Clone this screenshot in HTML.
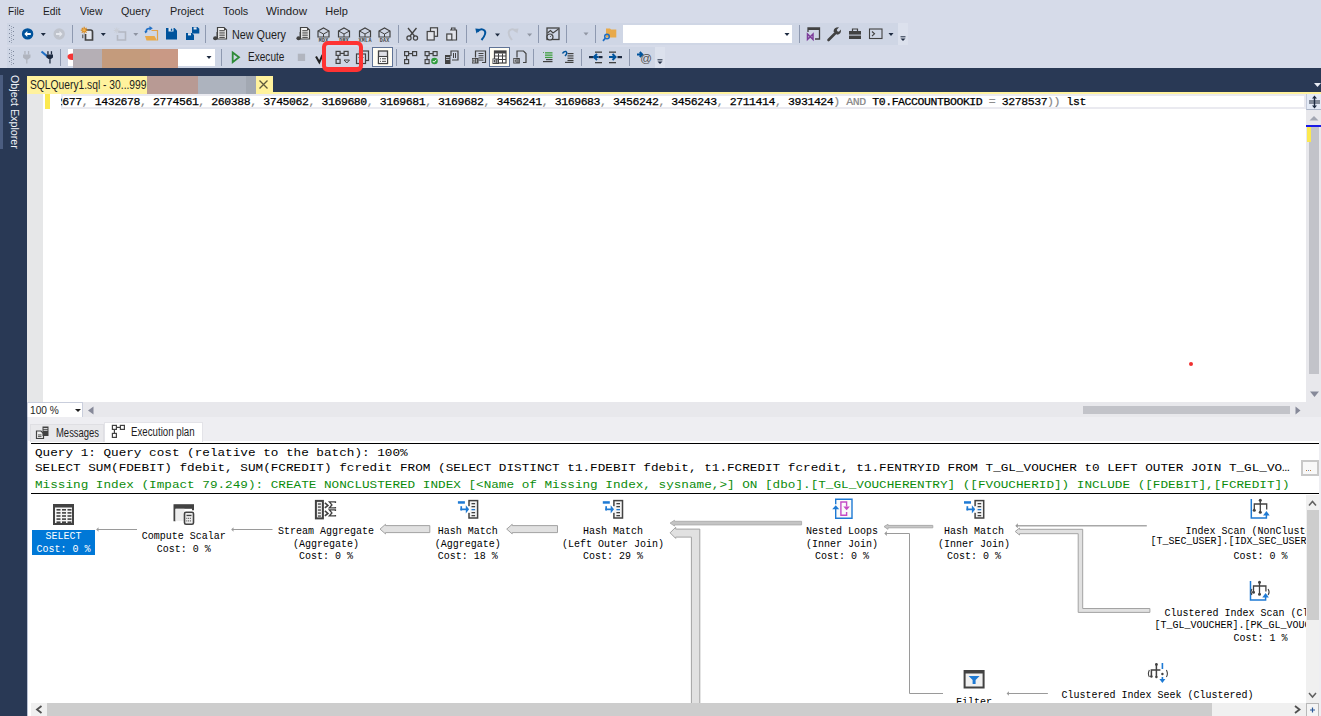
<!DOCTYPE html>
<html><head><meta charset="utf-8">
<style>
*{box-sizing:border-box}
html,body{margin:0;padding:0}
body{width:1321px;height:716px;overflow:hidden;position:relative;background:#D6DBE9;font-family:"Liberation Sans",sans-serif;}
.a{position:absolute}
.t{position:absolute;white-space:pre;line-height:1;transform-origin:0 0}
.code i{font-style:normal;color:#808080;-webkit-text-stroke:0.2px #9a9a9a}
svg{position:absolute;left:0;top:0;overflow:visible}
</style></head>
<body>
<div class="t" style="left:7.50px;top:6.00px;font-family:'Liberation Sans',sans-serif;font-size:11px;color:#1E1E1E;transform:scaleX(0.9204);">File</div>
<div class="t" style="left:42.90px;top:6.00px;font-family:'Liberation Sans',sans-serif;font-size:11px;color:#1E1E1E;transform:scaleX(0.9328);">Edit</div>
<div class="t" style="left:79.70px;top:6.00px;font-family:'Liberation Sans',sans-serif;font-size:11px;color:#1E1E1E;transform:scaleX(0.9514);">View</div>
<div class="t" style="left:121.30px;top:6.00px;font-family:'Liberation Sans',sans-serif;font-size:11px;color:#1E1E1E;transform:scaleX(0.9775);">Query</div>
<div class="t" style="left:169.60px;top:6.00px;font-family:'Liberation Sans',sans-serif;font-size:11px;color:#1E1E1E;transform:scaleX(0.9880);">Project</div>
<div class="t" style="left:222.50px;top:6.00px;font-family:'Liberation Sans',sans-serif;font-size:11px;color:#1E1E1E;transform:scaleX(0.9811);">Tools</div>
<div class="t" style="left:266.00px;top:6.00px;font-family:'Liberation Sans',sans-serif;font-size:11px;color:#1E1E1E;transform:scaleX(1.0470);">Window</div>
<div class="t" style="left:325.30px;top:6.00px;font-family:'Liberation Sans',sans-serif;font-size:11px;color:#1E1E1E;">Help</div>
<div class="a" style="left:7px;top:23px;width:891px;height:22px;background:#CFD6E5;"></div>
<div class="a" style="left:898px;top:23px;width:10px;height:22px;background:#DCE1ED;"></div>
<div class="a" style="left:7px;top:47px;width:648px;height:21px;background:#CFD6E5;"></div>
<div class="a" style="left:655px;top:47px;width:10px;height:21px;background:#DCE1ED;"></div>
<div class="a" style="left:623px;top:25px;width:169px;height:18px;background:#FFFFFF;"></div>
<div class="a" style="left:68px;top:49px;width:147px;height:17px;background:#FFFFFF;"></div>
<div class="a" style="left:73px;top:49px;width:29px;height:20px;background:#B5AFB5;"></div>
<div class="a" style="left:102px;top:49px;width:48px;height:20px;background:#C49B7C;"></div>
<div class="a" style="left:150px;top:49px;width:28px;height:20px;background:#C99985;"></div>
<div class="a" style="left:372px;top:47px;width:21px;height:20px;background:#FFFDF4;border:1px solid #5F7396"></div>
<div class="a" style="left:489px;top:47px;width:21px;height:20px;background:#FFFDF4;border:1px solid #5F7396"></div>
<div class="t" style="left:231.70px;top:29.00px;font-family:'Liberation Sans',sans-serif;font-size:12px;color:#1E1E1E;transform:scaleX(0.8983);">New Query</div>
<div class="t" style="left:247.50px;top:51.00px;font-family:'Liberation Sans',sans-serif;font-size:12px;color:#1E1E1E;transform:scaleX(0.8391);">Execute</div>
<div class="a" style="left:0px;top:68px;width:1321px;height:24px;background:#293955;"></div>
<div class="a" style="left:0px;top:68px;width:27px;height:648px;background:#293955;"></div>
<div class="a" style="left:0px;top:75px;width:3px;height:74px;background:#4B5D80;"></div>
<div class="t" style="left:19.5px;top:75px;font-size:11px;color:#F0F2F8;transform:rotate(90deg) scaleX(0.974)">Object Explorer</div>
<div class="a" style="left:27px;top:92px;width:1294px;height:2px;background:#FFF29D;"></div>
<div class="a" style="left:27px;top:76px;width:246px;height:18px;background:#FFF29D;"></div>
<div class="t" style="left:30.20px;top:79.00px;font-family:'Liberation Sans',sans-serif;font-size:12px;color:#1E1E1E;transform:scaleX(0.8561);">SQLQuery1.sql - 30...999</div>
<div class="a" style="left:147px;top:76px;width:51px;height:18px;background:#B89A94;"></div>
<div class="a" style="left:198px;top:76px;width:48px;height:18px;background:#ADB3BE;"></div>
<div class="a" style="left:246px;top:76px;width:10px;height:18px;background:#A2A8B2;"></div>
<div class="a" style="left:27px;top:94px;width:1279px;height:308px;background:#FFFFFF;"></div>
<div class="a" style="left:27px;top:94px;width:16px;height:308px;background:#E6E7E8;"></div>
<div class="a" style="left:45px;top:94px;width:5px;height:15px;background:#FCE94F;"></div>
<div class="a" style="left:61px;top:94px;width:1245px;height:15px;background:transparent;border:2px solid #EAEAF0"></div>
<div class="a" style="left:61px;top:94px;width:1244px;height:16px;overflow:hidden"><div class="t code" style="left:-5.2px;top:2px;font-family:&quot;Liberation Mono&quot;,monospace;font-size:11.5px;letter-spacing:-0.424px;color:#000;-webkit-text-stroke:0.25px #000">2677<i>, </i>1432678<i>, </i>2774561<i>, </i>260388<i>, </i>3745062<i>, </i>3169680<i>, </i>3169681<i>, </i>3169682<i>, </i>3456241<i>, </i>3169683<i>, </i>3456242<i>, </i>3456243<i>, </i>2711414<i>, </i>3931424<i>) AND </i>T0.FACCOUNTBOOKID<i> = </i>3278537<i>)) </i>lst</div></div>
<div class="a" style="left:1306px;top:94px;width:15px;height:323px;background:#E8E8EC;"></div>
<div class="a" style="left:1306px;top:94px;width:15px;height:16px;background:#E4EAF6;border-left:1px solid #C3CADA;border-bottom:1px solid #AAB4C6"></div>
<div class="a" style="left:1309px;top:100px;width:11px;height:4px;background:#858D9B;"></div>
<div class="a" style="left:1306px;top:125px;width:15px;height:2px;background:#1A1AE6;"></div>
<div class="a" style="left:1309px;top:127px;width:10px;height:247px;background:#C2C3C9;"></div>
<div class="a" style="left:1307px;top:127px;width:4px;height:15px;background:#FCE94F;"></div>
<div class="a" style="left:1189px;top:362px;width:4px;height:4px;border-radius:2px;background:#F03030"></div>
<div class="a" style="left:27px;top:402px;width:1279px;height:15px;background:#E8E8EC;"></div>
<div class="a" style="left:27px;top:402px;width:56px;height:16px;background:#FFFFFF;border:1px solid #C9CEDC"></div>
<div class="t" style="left:29.80px;top:405.00px;font-family:'Liberation Sans',sans-serif;font-size:11px;color:#1E1E1E;transform:scaleX(0.9235);">100 %</div>
<div class="a" style="left:1083px;top:406px;width:207px;height:8px;background:#C2C3C9;"></div>
<div class="a" style="left:27px;top:417px;width:1294px;height:299px;background:#EEEEF2;"></div>
<div class="a" style="left:28px;top:441px;width:1291px;height:275px;background:#FFFFFF;"></div>
<div class="a" style="left:27px;top:417px;width:1px;height:299px;background:#B9C1D3;"></div>
<div class="a" style="left:30px;top:424px;width:74px;height:18px;background:#E9E9EC;border:1px solid #DFDFE3;border-bottom:none"></div>
<div class="t" style="left:55.60px;top:427.00px;font-family:'Liberation Sans',sans-serif;font-size:12px;color:#1E1E1E;transform:scaleX(0.7876);">Messages</div>
<div class="a" style="left:104px;top:422px;width:99px;height:20px;background:#FFFFFF;border:1px solid #E3E3E8;border-bottom:none"></div>
<div class="t" style="left:131.30px;top:426.00px;font-family:'Liberation Sans',sans-serif;font-size:12px;color:#1E1E1E;transform:scaleX(0.8079);">Execution plan</div>
<div class="a" style="left:31px;top:443px;width:1288px;height:1px;background:#000000;"></div>
<div class="a" style="left:31px;top:493px;width:1288px;height:1px;background:#000000;"></div>
<div class="t" style="left:35.00px;top:447.00px;font-family:'Liberation Mono',monospace;font-size:12.68px;color:#000000;transform:scaleY(0.9);transform-origin:0 9px">Query 1: Query cost (relative to the batch): 100%</div>
<div class="t" style="left:35.00px;top:462.00px;font-family:'Liberation Mono',monospace;font-size:12.68px;color:#000000;transform:scaleY(0.9);transform-origin:0 9px">SELECT SUM(FDEBIT) fdebit, SUM(FCREDIT) fcredit FROM (SELECT DISTINCT t1.FDEBIT fdebit, t1.FCREDIT fcredit, t1.FENTRYID FROM T_GL_VOUCHER t0 LEFT OUTER JOIN T_GL_VO…</div>
<div class="t" style="left:35.00px;top:479.00px;font-family:'Liberation Mono',monospace;font-size:12.68px;color:#0C8C0C;transform:scaleY(0.9);transform-origin:0 9px">Missing Index (Impact 79.249): CREATE NONCLUSTERED INDEX [&lt;Name of Missing Index, sysname,&gt;] ON [dbo].[T_GL_VOUCHERENTRY] ([FVOUCHERID]) INCLUDE ([FDEBIT],[FCREDIT])</div>
<div class="a" style="left:1301px;top:460px;width:18px;height:16px;background:#F8F8F8;border:2px solid #C8C8C8"></div>
<div class="a" style="left:1306px;top:470px;width:1px;height:1px;background:#C08040;"></div>
<div class="a" style="left:1308px;top:470px;width:1px;height:1px;background:#7090C0;"></div>
<div class="a" style="left:1310px;top:470px;width:1px;height:1px;background:#C08040;"></div>
<div class="a" style="left:31px;top:495px;width:1275px;height:208px;overflow:hidden">
<div class="a" style="left:1px;top:35px;width:63px;height:25px;background:#0078D7;"></div>
<div class="t" style="left:14.50px;top:37.00px;font-family:'Liberation Mono',monospace;font-size:10px;color:#FFFFFF;">SELECT</div>
<div class="t" style="left:5.50px;top:50.00px;font-family:'Liberation Mono',monospace;font-size:10px;color:#FFFFFF;">Cost: 0 %</div>
<div class="t" style="left:110.74px;top:37.00px;font-family:'Liberation Mono',monospace;font-size:10px;color:#000000;">Compute Scalar</div>
<div class="t" style="left:125.75px;top:50.00px;font-family:'Liberation Mono',monospace;font-size:10px;color:#000000;">Cost: 0 %</div>
<div class="t" style="left:246.99px;top:32.00px;font-family:'Liberation Mono',monospace;font-size:10px;color:#000000;">Stream Aggregate</div>
<div class="t" style="left:262.00px;top:45.00px;font-family:'Liberation Mono',monospace;font-size:10px;color:#000000;">(Aggregate)</div>
<div class="t" style="left:268.00px;top:57.00px;font-family:'Liberation Mono',monospace;font-size:10px;color:#000000;">Cost: 0 %</div>
<div class="t" style="left:406.80px;top:32.00px;font-family:'Liberation Mono',monospace;font-size:10px;color:#000000;">Hash Match</div>
<div class="t" style="left:403.80px;top:45.00px;font-family:'Liberation Mono',monospace;font-size:10px;color:#000000;">(Aggregate)</div>
<div class="t" style="left:406.80px;top:57.00px;font-family:'Liberation Mono',monospace;font-size:10px;color:#000000;">Cost: 18 %</div>
<div class="t" style="left:552.00px;top:32.00px;font-family:'Liberation Mono',monospace;font-size:10px;color:#000000;">Hash Match</div>
<div class="t" style="left:530.99px;top:45.00px;font-family:'Liberation Mono',monospace;font-size:10px;color:#000000;">(Left Outer Join)</div>
<div class="t" style="left:552.00px;top:57.00px;font-family:'Liberation Mono',monospace;font-size:10px;color:#000000;">Cost: 29 %</div>
<div class="t" style="left:775.00px;top:32.00px;font-family:'Liberation Mono',monospace;font-size:10px;color:#000000;">Nested Loops</div>
<div class="t" style="left:775.00px;top:45.00px;font-family:'Liberation Mono',monospace;font-size:10px;color:#000000;">(Inner Join)</div>
<div class="t" style="left:784.00px;top:57.00px;font-family:'Liberation Mono',monospace;font-size:10px;color:#000000;">Cost: 0 %</div>
<div class="t" style="left:913.00px;top:32.00px;font-family:'Liberation Mono',monospace;font-size:10px;color:#000000;">Hash Match</div>
<div class="t" style="left:907.00px;top:45.00px;font-family:'Liberation Mono',monospace;font-size:10px;color:#000000;">(Inner Join)</div>
<div class="t" style="left:916.00px;top:57.00px;font-family:'Liberation Mono',monospace;font-size:10px;color:#000000;">Cost: 0 %</div>
<div class="t" style="left:1154.49px;top:32.00px;font-family:'Liberation Mono',monospace;font-size:10px;color:#000000;">Index Scan (NonClustered)</div>
<div class="t" style="left:1119.60px;top:42.00px;font-family:'Liberation Mono',monospace;font-size:10px;color:#000000;">[T_SEC_USER].[IDX_SEC_USER_FUSERID]</div>
<div class="t" style="left:1202.50px;top:57.00px;font-family:'Liberation Mono',monospace;font-size:10px;color:#000000;">Cost: 0 %</div>
<div class="t" style="left:1133.49px;top:114.00px;font-family:'Liberation Mono',monospace;font-size:10px;color:#000000;">Clustered Index Scan (Clustered)</div>
<div class="t" style="left:1123.40px;top:126.00px;font-family:'Liberation Mono',monospace;font-size:10px;color:#000000;">[T_GL_VOUCHER].[PK_GL_VOUCHER_FID]</div>
<div class="t" style="left:1202.50px;top:139.00px;font-family:'Liberation Mono',monospace;font-size:10px;color:#000000;">Cost: 1 %</div>
<div class="t" style="left:1030.49px;top:196.00px;font-family:'Liberation Mono',monospace;font-size:10px;color:#000000;">Clustered Index Seek (Clustered)</div>
<div class="t" style="left:925.00px;top:203.00px;font-family:'Liberation Mono',monospace;font-size:10px;color:#000000;">Filter</div>
<svg width="1275" height="208" viewBox="0 0 1275 208"><path d="M66.2 34.5 H106.0" stroke="#9A9A9A" stroke-width="1" fill="none"/><path d="M65.2 34.5 L67.5 32.2 L67.5 36.8 Z" fill="#9A9A9A"/><path d="M201.2 34.5 H241.5" stroke="#9A9A9A" stroke-width="1" fill="none"/><path d="M200.2 34.5 L202.5 32.2 L202.5 36.8 Z" fill="#9A9A9A"/><path d="M976.6 198.5 H1016.9" stroke="#9A9A9A" stroke-width="1" fill="none"/><path d="M975.6 198.5 L977.9 196.2 L977.9 200.8 Z" fill="#9A9A9A"/><path d="M854.0 38.5 H878.5 V198.5 H912" stroke="#9A9A9A" stroke-width="1" fill="none"/><path d="M853.3 38.5 L855.8 36.0 L855.8 41.0 Z" fill="#9A9A9A"/><path d="M985.0 30.7 H1115.8" stroke="#A8A8A8" stroke-width="1.5" fill="none"/><path d="M984.3 30.7 L986.8 28.2 L986.8 33.2 Z" fill="#9A9A9A"/><path d="M349.0 34.1 L354.5 29.3 L354.5 30.6 L398.8 30.6 L398.8 37.6 L354.5 37.6 L354.5 38.9 Z" fill="#E1E1E1" stroke="#A3A3A3" stroke-width="1"/><path d="M475.7 34.1 L481.2 29.3 L481.2 30.6 L526.5 30.6 L526.5 37.6 L481.2 37.6 L481.2 38.9 Z" fill="#E1E1E1" stroke="#A3A3A3" stroke-width="1"/><path d="M639.1 28.1 L643.5 25.3 L643.5 26.3 L770.6 26.3 L770.6 29.9 L643.5 29.9 L643.5 31.0 Z" fill="#C4C4C4" stroke="#B0B0B0" stroke-width="1"/><path d="M853.0 31.6 L857.0 29.3 L857.0 30.4 L901.8 30.4 L901.8 32.8 L857.0 32.8 L857.0 34.3 Z" fill="#C8C8C8" stroke="#ABABAB" stroke-width="1"/><path d="M639.1 37.8 L644.7 32.3 L644.7 34.1 L668.8 34.1 L668.8 225.0 L660.4 225.0 L660.4 42.1 L644.7 42.1 L644.7 43.4 Z" fill="#E1E1E1" stroke="#A3A3A3" stroke-width="1"/><path d="M984.2 36.5 L988.5 33.0 L988.5 34.3 L1051.7 34.3 L1051.7 113.5 L1118.9 113.5 L1118.9 117.4 L1047.2 117.4 L1047.2 38.7 L988.5 38.7 L988.5 40.0 Z" fill="#E1E1E1" stroke="#A3A3A3" stroke-width="1"/><rect x="23" y="10" width="19" height="19" fill="#F5F5F5" stroke="#424242" stroke-width="2"/><rect x="23" y="10" width="19" height="2.5" fill="#424242"/><rect x="25.5" y="14.0" width="4" height="1.6" fill="#424242"/><rect x="31.0" y="14.0" width="4" height="1.6" fill="#424242"/><rect x="36.5" y="14.0" width="4" height="1.6" fill="#424242"/><rect x="25.5" y="17.1" width="4" height="1.6" fill="#424242"/><rect x="31.0" y="17.1" width="4" height="1.6" fill="#424242"/><rect x="36.5" y="17.1" width="4" height="1.6" fill="#424242"/><rect x="25.5" y="20.2" width="4" height="1.6" fill="#424242"/><rect x="31.0" y="20.2" width="4" height="1.6" fill="#424242"/><rect x="36.5" y="20.2" width="4" height="1.6" fill="#424242"/><rect x="25.5" y="23.3" width="4" height="1.6" fill="#424242"/><rect x="31.0" y="23.3" width="4" height="1.6" fill="#424242"/><rect x="36.5" y="23.3" width="4" height="1.6" fill="#424242"/><rect x="25.5" y="26.4" width="4" height="1.6" fill="#424242"/><rect x="31.0" y="26.4" width="4" height="1.6" fill="#424242"/><rect x="36.5" y="26.4" width="4" height="1.6" fill="#424242"/><path d="M143.5 26.30000000000001 V10.300000000000011 H162.0 V15.300000000000011" fill="none" stroke="#424242" stroke-width="2"/><rect x="143.5" y="9.800000000000011" width="19.5" height="4" fill="#424242"/><rect x="144.5" y="13.800000000000011" width="9" height="12" fill="#EDEDED"/><rect x="153.5" y="17.30000000000001" width="9" height="12" rx="1.5" fill="#EDEDED" stroke="#424242" stroke-width="1.6"/><rect x="155.5" y="19.80000000000001" width="5" height="1.3" fill="#424242"/><rect x="155.3" y="22.8" width="1" height="1" fill="#424242"/><rect x="157.1" y="22.8" width="1" height="1" fill="#424242"/><rect x="158.9" y="22.8" width="1" height="1" fill="#424242"/><rect x="155.3" y="25.4" width="1" height="1" fill="#424242"/><rect x="157.1" y="25.4" width="1" height="1" fill="#424242"/><rect x="158.9" y="25.4" width="1" height="1" fill="#424242"/><rect x="284.9" y="5.899999999999977" width="7" height="17.5" fill="#F0F0F0" stroke="#424242" stroke-width="2"/><rect x="286.9" y="8.399999999999977" width="3" height="1.3" fill="#424242"/><rect x="286.9" y="11.399999999999977" width="3" height="1.3" fill="#424242"/><rect x="286.9" y="14.399999999999977" width="3" height="1.3" fill="#424242"/><rect x="286.9" y="17.399999999999977" width="3" height="1.3" fill="#424242"/><rect x="286.9" y="20.399999999999977" width="3" height="1.3" fill="#424242"/><path d="M293.9 7.899999999999977 L296.9 10.399999999999977 L293.9 12.899999999999977 M293.9 15.899999999999977 L296.9 18.399999999999977 L293.9 20.899999999999977" fill="none" stroke="#424242" stroke-width="1.6"/><path d="M304.4 7.899999999999977 V6.899999999999977 H298.4 L300.9 9.899999999999977 L298.4 12.899999999999977 H304.4 V11.899999999999977" fill="none" stroke="#424242" stroke-width="1.4"/><path d="M304.4 15.899999999999977 V14.899999999999977 H298.4 L300.9 17.899999999999977 L298.4 20.899999999999977 H304.4 V19.899999999999977" fill="none" stroke="#424242" stroke-width="1.4"/><rect x="438.0" y="5.599999999999977" width="8.6" height="17.4" fill="#F4F4F4" stroke="#424242" stroke-width="1.5"/><rect x="437.0" y="11.199999999999978" width="2" height="6.6" fill="#FFFFFF"/><rect x="440.5" y="8.0" width="3.6" height="1.3" fill="#424242"/><rect x="440.5" y="11.0" width="3.6" height="1.3" fill="#424242"/><rect x="440.5" y="14.0" width="3.6" height="1.3" fill="#1E7AD4"/><rect x="440.5" y="17.0" width="3.6" height="1.3" fill="#424242"/><rect x="440.5" y="20.0" width="3.6" height="1.3" fill="#424242"/><rect x="426.9" y="6.199999999999977" width="7" height="2.5" fill="#1E7AD4"/><rect x="429.4" y="11.199999999999978" width="1.7" height="4.3" fill="#1E7AD4"/><rect x="429.4" y="13.499999999999977" width="6" height="1.7" fill="#1E7AD4"/><path d="M434.8 10.299999999999978 L438.1 14.349999999999977 L434.8 18.399999999999977 Z" fill="#1E7AD4"/><rect x="582.9" y="5.599999999999977" width="8.6" height="17.4" fill="#F4F4F4" stroke="#424242" stroke-width="1.5"/><rect x="581.9" y="11.199999999999978" width="2" height="6.6" fill="#FFFFFF"/><rect x="585.4" y="8.0" width="3.6" height="1.3" fill="#424242"/><rect x="585.4" y="11.0" width="3.6" height="1.3" fill="#424242"/><rect x="585.4" y="14.0" width="3.6" height="1.3" fill="#1E7AD4"/><rect x="585.4" y="17.0" width="3.6" height="1.3" fill="#424242"/><rect x="585.4" y="20.0" width="3.6" height="1.3" fill="#424242"/><rect x="571.8" y="6.199999999999977" width="7" height="2.5" fill="#1E7AD4"/><rect x="574.3" y="11.199999999999978" width="1.7" height="4.3" fill="#1E7AD4"/><rect x="574.3" y="13.499999999999977" width="6" height="1.7" fill="#1E7AD4"/><path d="M579.6999999999999 10.299999999999978 L583.0 14.349999999999977 L579.6999999999999 18.399999999999977 Z" fill="#1E7AD4"/><rect x="944.1" y="5.599999999999977" width="8.6" height="17.4" fill="#F4F4F4" stroke="#424242" stroke-width="1.5"/><rect x="943.1" y="11.199999999999978" width="2" height="6.6" fill="#FFFFFF"/><rect x="946.6" y="8.0" width="3.6" height="1.3" fill="#424242"/><rect x="946.6" y="11.0" width="3.6" height="1.3" fill="#424242"/><rect x="946.6" y="14.0" width="3.6" height="1.3" fill="#1E7AD4"/><rect x="946.6" y="17.0" width="3.6" height="1.3" fill="#424242"/><rect x="946.6" y="20.0" width="3.6" height="1.3" fill="#424242"/><rect x="933.0" y="6.199999999999977" width="7" height="2.5" fill="#1E7AD4"/><rect x="935.5" y="11.199999999999978" width="1.7" height="4.3" fill="#1E7AD4"/><rect x="935.5" y="13.499999999999977" width="6" height="1.7" fill="#1E7AD4"/><path d="M940.9 10.299999999999978 L944.2 14.349999999999977 L940.9 18.399999999999977 Z" fill="#1E7AD4"/><path d="M804.7 9.2 V4.2 H821.0 V23.3 H804.7 V13.5" fill="#FAFAFA" stroke="#1E7AD4" stroke-width="1.4"/><path d="M801.2 14.3 L804.7 10.2 L808.2 14.3 Z" fill="#1E7AD4"/><path d="M815.6 11.5 V7.0 H809.9 V20.2 H815.6 V17.0" fill="none" stroke="#C54BC5" stroke-width="1.4"/><path d="M812.3 11.6 L815.6 15.3 L818.9 11.6 Z" fill="#C54BC5"/><rect x="933.6" y="176" width="19" height="16.5" fill="#F0F0F0" stroke="#424242" stroke-width="2"/><rect x="933.6" y="176" width="19" height="2.5" fill="#424242"/><path d="M937.6 181 H948.6 L944.6 185 V189 H941.6 V185 Z" fill="#1E7AD4"/><path d="M1220.3 4.0 V23.1 H1235.4 V18.5" fill="none" stroke="#1E7AD4" stroke-width="1.5"/><path d="M1232.1 20.5 L1235.4 16.1 L1238.7 20.5 Z" fill="#1E7AD4"/><path d="M1229.3 5.0 V17.3 M1223.3 15.3 V9.0 H1235.7 V14.5" fill="none" stroke="#424242" stroke-width="1.3"/><circle cx="1229.3" cy="5.2" r="1.5" fill="#424242"/><circle cx="1223.3" cy="15.3" r="1.5" fill="#424242"/><circle cx="1229.3" cy="17.3" r="1.5" fill="#424242"/><path d="M1219.5 86.0 V105.1 H1234.6000000000001 V100.5" fill="none" stroke="#1E7AD4" stroke-width="1.5"/><path d="M1231.3 102.5 L1234.6000000000001 98.1 L1237.9 102.5 Z" fill="#1E7AD4"/><path d="M1228.5 87.0 V99.3 M1222.5 97.3 V91.0 H1234.9 V96.5" fill="none" stroke="#424242" stroke-width="1.3"/><circle cx="1228.5" cy="87.2" r="1.5" fill="#424242"/><circle cx="1222.5" cy="97.3" r="1.5" fill="#424242"/><circle cx="1228.5" cy="99.3" r="1.5" fill="#424242"/><path d="M1220.9 94.0 Q1218.9 97.0 1220.9 100.0 M1237.1000000000001 94.0 Q1239.1000000000001 97.0 1237.1000000000001 100.0" fill="none" stroke="#424242" stroke-width="1.1"/><path d="M1125.4 169 V182 M1120.4 182 V175 H1129.4" fill="none" stroke="#424242" stroke-width="1.5"/><circle cx="1125.4" cy="169.5" r="1.4" fill="#424242"/><circle cx="1120.4" cy="181.5" r="1.2" fill="#424242"/><circle cx="1125.4" cy="182" r="1.2" fill="#424242"/><circle cx="1131.4" cy="179" r="1.2" fill="#424242"/><path d="M1131.4 168 V174 M1131.4 182 V185" fill="none" stroke="#1E7AD4" stroke-width="1.6"/><path d="M1128.4 184 L1131.4 188 L1134.4 184 Z" fill="#1E7AD4"/><path d="M1118.4 175 Q1116.4 179 1118.4 182 M1135.4 175 Q1137.4 179 1135.4 182" fill="none" stroke="#424242" stroke-width="1.1"/></svg>
</div>
<div class="a" style="left:1306px;top:495px;width:13px;height:208px;background:#F0F0F0;"></div>
<div class="a" style="left:1306.5px;top:510px;width:12px;height:110px;background:#CDCDCD;"></div>
<div class="a" style="left:31px;top:703px;width:1275px;height:13px;background:#F0F0F0;"></div>
<div class="a" style="left:47px;top:703px;width:1165px;height:13px;background:#CDCDCD;"></div>
<div class="a" style="left:1306px;top:703px;width:13px;height:13px;background:#F4F4F4;border:1px solid #B8B8B8;border-bottom:none"></div>
<svg width="1321" height="716" viewBox="0 0 1321 716"><path d="M1314 83 H1321 L1317.5 87 Z" fill="#E8ECF4"/><path d="M259.5 80.5 L267.5 88.5 M267.5 80.5 L259.5 88.5" stroke="#5E5A3C" stroke-width="1.3"/><path d="M1314.5 95.5 L1317 98.5 H1315.2 V105.5 H1317 L1314.5 108.5 L1312 105.5 H1313.8 V98.5 H1312 Z" fill="#1E2B41"/><path d="M1309.5 120.5 L1314 116 L1318.5 120.5 Z" fill="#A3A7B3"/><path d="M1310 391.5 H1319 L1314.5 397 Z" fill="#868999"/><path d="M75 409 H81 L78 412 Z" fill="#1E1E1E"/><path d="M93.5 406.5 V414.5 L88 410.5 Z" fill="#868999"/><path d="M1295.5 406.5 V414.5 L1300.5 410.5 Z" fill="#868999"/><path d="M1309 505.5 L1312.5 501.5 L1316 505.5" fill="none" stroke="#606060" stroke-width="1.5"/><path d="M1309 693 L1312.5 697 L1316 693" fill="none" stroke="#606060" stroke-width="1.5"/><path d="M41.5 706 L37 709.5 L41.5 713" fill="none" stroke="#505050" stroke-width="1.8"/><path d="M1295 706 L1299.5 709.5 L1295 713" fill="none" stroke="#505050" stroke-width="1.8"/><path d="M1310 710 H1315 M1312.5 707.5 V712.5" stroke="#2B5797" stroke-width="1.2"/><rect x="9" y="25" width="1" height="1" fill="#7D879C"/><rect x="11" y="26" width="1" height="1" fill="#9AA3B5"/><rect x="13" y="27" width="1" height="1" fill="#7D879C"/><rect x="11" y="28" width="1" height="1" fill="#9AA3B5"/><rect x="9" y="29" width="1" height="1" fill="#7D879C"/><rect x="11" y="30" width="1" height="1" fill="#9AA3B5"/><rect x="13" y="31" width="1" height="1" fill="#7D879C"/><rect x="11" y="32" width="1" height="1" fill="#9AA3B5"/><rect x="9" y="33" width="1" height="1" fill="#7D879C"/><rect x="11" y="34" width="1" height="1" fill="#9AA3B5"/><rect x="13" y="35" width="1" height="1" fill="#7D879C"/><rect x="11" y="36" width="1" height="1" fill="#9AA3B5"/><rect x="9" y="37" width="1" height="1" fill="#7D879C"/><rect x="11" y="38" width="1" height="1" fill="#9AA3B5"/><rect x="13" y="39" width="1" height="1" fill="#7D879C"/><rect x="11" y="40" width="1" height="1" fill="#9AA3B5"/><rect x="9" y="41" width="1" height="1" fill="#7D879C"/><rect x="11" y="42" width="1" height="1" fill="#9AA3B5"/><circle cx="27.6" cy="33.9" r="5.7" fill="#00539C"/><path d="M24.3 33.9 L27.3 30.9 V32.9 H30.8 V34.9 H27.3 V36.9 Z" fill="#FFFFFF"/><path d="M40.8 33.0 H45.8 L43.3 36.0 Z" fill="#1E2B41"/><circle cx="59.2" cy="34" r="5.7" fill="#C0C4CD"/><path d="M62.5 34 L59.5 31 V33 H56 V35 H59.5 V37 Z" fill="#E6E9EF"/><rect x="72" y="25" width="1" height="18" fill="#8E99B0"/><path d="M86 30 H90.5 Q92.5 30 92.5 32 V40 H85.5 V34" fill="#E4E7EE" stroke="#424242" stroke-width="1.7"/><path d="M82.8 34.5 V38.2" stroke="#424242" stroke-width="1"/><path d="M84.2 26.8 V33.6 M80.8 30.2 H87.6 M81.8 27.8 L86.6 32.6 M86.6 27.8 L81.8 32.6" stroke="#D98A1E" stroke-width="1.2"/><circle cx="84.2" cy="30.2" r="1.3" fill="#F2B34A"/><path d="M100.8 33.0 H105.8 L103.3 36.0 Z" fill="#1E2B41"/><path d="M118 32 H125.5 V40 H117.5 V35" fill="none" stroke="#B4B8C2" stroke-width="1.6"/><path d="M116.8 27.5 V33.5 M113.8 30.5 H119.8 M114.7 28.4 L118.9 32.6 M118.9 28.4 L114.7 32.6" stroke="#C9CDD6" stroke-width="1"/><path d="M133.3 33.0 H138.3 L135.8 36.0 Z" fill="#8E94A2"/><path d="M151.5 30.5 H157.5 V40.5" fill="none" stroke="#E2A24A" stroke-width="1.2"/><path d="M145 36 H154.5 L157 40.5 H146.5 Z" fill="#E8A94A"/><path d="M146.3 32.5 Q145.5 28.5 150 28.3" fill="none" stroke="#1F6FC5" stroke-width="1.8"/><path d="M149.5 26 L152.8 28.3 L149.5 30.6 Z" fill="#1F6FC5"/><path d="M147.5 31 L145.3 33.5 L144.5 31" fill="#1F6FC5"/><path d="M166 28 H174.5 L177 30.5 V39.5 H166 Z" fill="#00539C"/><rect x="168.5" y="28" width="5" height="3.5" fill="#E6EAF2"/><rect x="170.8" y="28.6" width="1.5" height="2.2" fill="#00539C"/><path d="M186 33 H192 L194 35 V40 H186 Z" fill="#00539C"/><path d="M192 27 H197.5 L199.3 28.8 V33.5 H192 Z" fill="#00539C"/><rect x="188" y="33.2" width="3" height="2.2" fill="#E6EAF2"/><rect x="193.6" y="27.3" width="3" height="2.2" fill="#E6EAF2"/><rect x="205" y="25" width="1" height="18" fill="#8E99B0"/><path d="M217.5 27.5 H224 L226.5 30 V39 H217.5 Z" fill="#F2F2F2" stroke="#424242" stroke-width="1.2"/><path d="M224 27.5 V30 H226.5" fill="#424242"/><rect x="219.3" y="30.2" width="5.5" height="1.1" fill="#424242"/><rect x="219.3" y="32.4" width="5.5" height="1.1" fill="#424242"/><rect x="219.3" y="34.6" width="5.5" height="1.1" fill="#424242"/><rect x="219.3" y="36.8" width="5.5" height="1.1" fill="#424242"/><ellipse cx="215.3" cy="38.2" rx="2.2" ry="2" fill="#424242"/><rect x="216.5" y="32" width="1" height="5" fill="#424242"/><path d="M300.5 27.5 H307 L309.5 30 V39 H300.5 Z" fill="#F2F2F2" stroke="#424242" stroke-width="1.2"/><path d="M307 27.5 V30 H309.5" fill="#424242"/><rect x="302.3" y="30.2" width="5.5" height="1.1" fill="#424242"/><rect x="302.3" y="32.4" width="5.5" height="1.1" fill="#424242"/><rect x="302.3" y="34.6" width="5.5" height="1.1" fill="#424242"/><rect x="302.3" y="36.8" width="5.5" height="1.1" fill="#424242"/><ellipse cx="298.6" cy="38.2" rx="2.2" ry="2" fill="#424242"/><rect x="299.6" y="32" width="1" height="5" fill="#424242"/><path d="M318 31 L323.5 28 L329 31 V37 H318 Z" fill="none" stroke="#424242" stroke-width="1.2"/><path d="M318 31 L323.5 34 L329 31 M323.5 34 V37" fill="none" stroke="#424242" stroke-width="1"/><text x="323.5" y="41.5" font-family="Liberation Mono" font-size="5" font-weight="bold" fill="#424242" text-anchor="middle" textLength="9.6">MDX</text><path d="M338.5 31 L344.0 28 L349.5 31 V37 H338.5 Z" fill="none" stroke="#424242" stroke-width="1.2"/><path d="M338.5 31 L344.0 34 L349.5 31 M344.0 34 V37" fill="none" stroke="#424242" stroke-width="1"/><text x="344.0" y="41.5" font-family="Liberation Mono" font-size="5" font-weight="bold" fill="#424242" text-anchor="middle" textLength="9.6">DMX</text><path d="M359.5 31 L365.0 28 L370.5 31 V37 H359.5 Z" fill="none" stroke="#424242" stroke-width="1.2"/><path d="M359.5 31 L365.0 34 L370.5 31 M365.0 34 V37" fill="none" stroke="#424242" stroke-width="1"/><text x="365.0" y="41.5" font-family="Liberation Mono" font-size="5" font-weight="bold" fill="#424242" text-anchor="middle" textLength="12.8">XMLA</text><path d="M379 31 L384.5 28 L390 31 V37 H379 Z" fill="none" stroke="#424242" stroke-width="1.2"/><path d="M379 31 L384.5 34 L390 31 M384.5 34 V37" fill="none" stroke="#424242" stroke-width="1"/><text x="384.5" y="41.5" font-family="Liberation Mono" font-size="5" font-weight="bold" fill="#424242" text-anchor="middle" textLength="9.6">DAX</text><rect x="398" y="25" width="1" height="18" fill="#8E99B0"/><path d="M408 28 L414.5 36 M416.5 28 L410 36" stroke="#424242" stroke-width="1.3"/><circle cx="409" cy="38" r="2.1" fill="none" stroke="#424242" stroke-width="1.2"/><circle cx="415.5" cy="38" r="2.1" fill="none" stroke="#424242" stroke-width="1.2"/><rect x="430.5" y="27.8" width="7" height="8.5" fill="#E2E4EA" stroke="#424242" stroke-width="1.2"/><rect x="427.2" y="31.5" width="7" height="8.5" fill="#E2E4EA" stroke="#424242" stroke-width="1.2"/><path d="M450 30 H456.5 V40 H452" fill="#E2E4EA" stroke="#424242" stroke-width="1.2"/><path d="M451.5 30 V28 H455 V30" fill="none" stroke="#424242" stroke-width="1.1"/><rect x="446.8" y="34" width="5" height="6" fill="#E2E4EA" stroke="#424242" stroke-width="1.2"/><rect x="466" y="25" width="1" height="18" fill="#8E99B0"/><path d="M477.5 31.5 Q481 27.5 484.5 30.5 Q487 33.5 481.5 40" fill="none" stroke="#00539C" stroke-width="2"/><path d="M475.3 28.5 L480.5 29 L476.5 33.5 Z" fill="#00539C"/><path d="M495.0 33.5 H500.0 L497.5 36.5 Z" fill="#1E2B41"/><path d="M516 31.5 Q512.5 27.5 509.5 30.5 Q507 33.5 512 40" fill="none" stroke="#C3C7D0" stroke-width="2"/><path d="M518.5 28.5 L513.3 29 L517.3 33.5 Z" fill="#C3C7D0"/><path d="M527.1 33.5 H532.1 L529.6 36.5 Z" fill="#9096A3"/><rect x="538" y="25" width="1" height="18" fill="#8E99B0"/><rect x="547" y="28" width="12" height="11.5" fill="none" stroke="#424242" stroke-width="1.3"/><path d="M547.5 33 L550.5 30.5 L553 33 L558.5 29" fill="none" stroke="#424242" stroke-width="1.1"/><circle cx="550" cy="37" r="3" fill="#CFD6E5" stroke="#424242" stroke-width="1.2"/><path d="M550 37 L551.5 35.5" stroke="#424242" stroke-width="0.8"/><rect x="566" y="25" width="1" height="18" fill="#8E99B0"/><path d="M583.5 32.5 H588.5 L586 35.5 Z" fill="#9096A3"/><rect x="595" y="25" width="1" height="18" fill="#8E99B0"/><path d="M606 28.5 H610 L611 29.5 H616.3 V37.5 H606 Z" fill="#E8A94A"/><circle cx="607" cy="36.5" r="2.3" fill="none" stroke="#1F6FC5" stroke-width="1.5"/><path d="M605.5 38 L603 40.8" stroke="#1F6FC5" stroke-width="1.8"/><path d="M784.5 33.0 H789.5 L787 36.0 Z" fill="#1E2B41"/><rect x="799" y="25" width="1" height="18" fill="#8E99B0"/><path d="M808 32 V28 H819.5 V39 H815" fill="none" stroke="#424242" stroke-width="1.3"/><rect x="808" y="28" width="11.5" height="2" fill="#424242"/><path d="M807.5 34 L813 39.5 V34 L807.5 39.5 Z" fill="none" stroke="#7E3E9A" stroke-width="1.5"/><path d="M828.5 40 L835 33.5" stroke="#424242" stroke-width="2.6" stroke-linecap="round"/><path d="M833.5 31.5 Q834 27 839 27.3 L836.8 29.7 L837.3 31.2 L838.8 31.7 L841 29.5 Q841.3 34.3 837 34.8 Z" fill="#424242"/><rect x="849" y="31" width="12" height="8" fill="#424242"/><path d="M852.5 31 V29 H857.5 V31" fill="none" stroke="#424242" stroke-width="1.2"/><rect x="849" y="34.6" width="12" height="1" fill="#CFD6E5"/><rect x="869.5" y="29" width="12.5" height="9.5" fill="none" stroke="#424242" stroke-width="1.1"/><path d="M872 31.5 L874.5 33.8 L872 36" fill="none" stroke="#424242" stroke-width="1.1"/><path d="M888.5 33.0 H893.5 L891 36.0 Z" fill="#1E2B41"/><rect x="900.5" y="36.3" width="5" height="1" fill="#1E2B41"/><path d="M900.5 38.5 H905.5 L903 41 Z" fill="#1E2B41"/><path d="M623 25 H792" stroke="#FFFFFF" stroke-width="0"/><rect x="9" y="49" width="1" height="1" fill="#7D879C"/><rect x="11" y="50" width="1" height="1" fill="#9AA3B5"/><rect x="13" y="51" width="1" height="1" fill="#7D879C"/><rect x="11" y="52" width="1" height="1" fill="#9AA3B5"/><rect x="9" y="53" width="1" height="1" fill="#7D879C"/><rect x="11" y="54" width="1" height="1" fill="#9AA3B5"/><rect x="13" y="55" width="1" height="1" fill="#7D879C"/><rect x="11" y="56" width="1" height="1" fill="#9AA3B5"/><rect x="9" y="57" width="1" height="1" fill="#7D879C"/><rect x="11" y="58" width="1" height="1" fill="#9AA3B5"/><rect x="13" y="59" width="1" height="1" fill="#7D879C"/><rect x="11" y="60" width="1" height="1" fill="#9AA3B5"/><rect x="9" y="61" width="1" height="1" fill="#7D879C"/><rect x="11" y="62" width="1" height="1" fill="#9AA3B5"/><rect x="13" y="63" width="1" height="1" fill="#7D879C"/><rect x="11" y="64" width="1" height="1" fill="#9AA3B5"/><path d="M23 54.5 H30.5 V57.5 L28 59.5 H25.5 L23 57.5 Z" fill="#B0B4BE"/><rect x="24.3" y="51" width="1.3" height="3.5" fill="#B0B4BE"/><rect x="27.9" y="51" width="1.3" height="3.5" fill="#B0B4BE"/><rect x="26.2" y="59" width="1.2" height="4.5" fill="#B0B4BE"/><path d="M41.5 51.5 L48 57" stroke="#1F6FC5" stroke-width="2.2"/><path d="M46.5 54.5 H53 V57.5 L51 59 H48.5 L46.5 57.5 Z" fill="#1E2B41"/><rect x="47.3" y="51.2" width="1.3" height="3.3" fill="#1E2B41"/><rect x="50.8" y="51.2" width="1.3" height="3.3" fill="#1E2B41"/><rect x="49.3" y="59" width="1.3" height="4.5" fill="#1E2B41"/><rect x="60" y="49" width="1" height="17" fill="#8E99B0"/><path d="M73 53.5 Q67 53.5 67.5 57 Q68 60.3 73 60" fill="#F53535"/><path d="M206.5 56.0 H211.5 L209 59.0 Z" fill="#1E2B41"/><rect x="221" y="49" width="1" height="17" fill="#8E99B0"/><path d="M232.7 52.5 L239 57.3 L232.7 62.2 Z" fill="none" stroke="#2E8B37" stroke-width="1.8"/><rect x="297.8" y="53.7" width="7.3" height="7.3" fill="#B1B5BF"/><path d="M316 56.5 L319.3 62.3 L322.5 55" fill="none" stroke="#222222" stroke-width="2"/><rect x="336.1" y="51.4" width="4" height="4" fill="none" stroke="#424242" stroke-width="1.2"/><rect x="344.1" y="51.4" width="4" height="4" fill="none" stroke="#424242" stroke-width="1.2"/><rect x="340.1" y="52.8" width="4" height="1.2" fill="#424242"/><rect x="336.1" y="59.4" width="4" height="4" fill="none" stroke="#424242" stroke-width="1.2"/><rect x="337.5" y="55.4" width="1.2" height="4" fill="#424242"/><path d="M344 60 H349.5 L346.8 63 Z" fill="none" stroke="#424242" stroke-width="1"/><rect x="359.5" y="51" width="9" height="9.5" fill="none" stroke="#424242" stroke-width="1.2"/><rect x="356.5" y="54" width="9" height="9.5" fill="#CFD6E5" stroke="#424242" stroke-width="1.2"/><rect x="358.5" y="57" width="5" height="1" fill="#424242"/><rect x="378.5" y="51" width="9" height="12.5" fill="#E0E0E6" stroke="#424242" stroke-width="1.3"/><rect x="378.5" y="56.5" width="9" height="7" fill="#FFFFFF" stroke="#424242" stroke-width="1.1"/><rect x="380" y="58.3" width="1" height="1" fill="#424242"/><rect x="382" y="58.3" width="4" height="1" fill="#424242"/><rect x="380" y="60.8" width="1" height="1" fill="#424242"/><rect x="382" y="60.8" width="4" height="1" fill="#424242"/><rect x="396" y="49" width="1" height="17" fill="#8E99B0"/><rect x="404.6" y="51.6" width="4" height="4" fill="none" stroke="#424242" stroke-width="1.2"/><rect x="412.6" y="51.6" width="4" height="4" fill="none" stroke="#424242" stroke-width="1.2"/><rect x="408.6" y="53" width="4" height="1.2" fill="#424242"/><rect x="404.6" y="59.6" width="4" height="4" fill="none" stroke="#424242" stroke-width="1.2"/><rect x="406" y="55.6" width="1.2" height="4" fill="#424242"/><rect x="425.1" y="51.6" width="4" height="4" fill="none" stroke="#424242" stroke-width="1.2"/><rect x="433.1" y="51.6" width="4" height="4" fill="none" stroke="#424242" stroke-width="1.2"/><rect x="429.1" y="53" width="4" height="1.2" fill="#424242"/><rect x="425.1" y="59.6" width="4" height="4" fill="none" stroke="#424242" stroke-width="1.2"/><rect x="426.5" y="55.6" width="1.2" height="4" fill="#424242"/><circle cx="434.5" cy="61" r="3.3" fill="#2E9B3C"/><path d="M432.8 61 L434 62.3 L436.3 59.8" fill="none" stroke="#FFFFFF" stroke-width="1"/><rect x="445" y="55" width="5.5" height="9" fill="#424242"/><path d="M451 56 V51 H458 V60 H452" fill="none" stroke="#424242" stroke-width="1.2"/><path d="M453.5 53 V58 M455.5 53 V58" stroke="#424242" stroke-width="1"/><rect x="446" y="57" width="3.5" height="0.8" fill="#CFD6E5"/><rect x="446" y="59" width="3.5" height="0.8" fill="#CFD6E5"/><rect x="464" y="49" width="1" height="17" fill="#8E99B0"/><path d="M475.5 57.5 V51 H485.5 V62.5 H482" fill="none" stroke="#424242" stroke-width="1.2"/><rect x="478.5" y="53.0" width="5" height="1" fill="#424242"/><rect x="478.5" y="55.2" width="5" height="1" fill="#424242"/><rect x="478.5" y="57.4" width="5" height="1" fill="#424242"/><rect x="478.5" y="59.6" width="5" height="1" fill="#424242"/><rect x="472" y="58" width="6.5" height="5.5" fill="#424242"/><rect x="473" y="59.2" width="1.8" height="3" fill="none" stroke="#D0D4DC" stroke-width="0.7"/><rect x="476.3" y="59" width="0.8" height="3.5" fill="#D0D4DC"/><rect x="494.5" y="51" width="11.5" height="12" fill="#FFFFFF" stroke="#424242" stroke-width="1.2"/><rect x="494.5" y="51" width="11.5" height="2.5" fill="#424242"/><path d="M494.5 56 H506 M494.5 59.5 H506 M498.5 53.5 V63 M502.5 53.5 V63" stroke="#424242" stroke-width="1"/><rect x="492.5" y="58.5" width="6.5" height="5.5" fill="#424242"/><rect x="493.5" y="59.7" width="1.8" height="3" fill="none" stroke="#D0D4DC" stroke-width="0.7"/><rect x="496.8" y="59.5" width="0.8" height="3.5" fill="#D0D4DC"/><path d="M517 57.5 V51 H523.5 L526 53.5 V62.5 H523" fill="none" stroke="#424242" stroke-width="1.2"/><rect x="513.3" y="58" width="6.5" height="5.5" fill="#424242"/><rect x="514.3" y="59.2" width="1.8" height="3" fill="none" stroke="#D0D4DC" stroke-width="0.7"/><rect x="517.5999999999999" y="59" width="0.8" height="3.5" fill="#D0D4DC"/><rect x="533" y="49" width="1" height="17" fill="#8E99B0"/><rect x="543" y="52" width="1" height="1" fill="#5B9A5B"/><rect x="545" y="52.2" width="7.5" height="1.3" fill="#3F9E3F"/><rect x="545" y="54.5" width="7.5" height="1.3" fill="#3F9E3F"/><rect x="545" y="56.8" width="7.5" height="1.3" fill="#3F9E3F"/><rect x="546" y="59" width="6.5" height="1.2" fill="#424242"/><rect x="543" y="61" width="9.5" height="1.2" fill="#424242"/><path d="M562.5 53.5 Q563.5 51 566 51.5 Q568 53 565 56" fill="none" stroke="#00539C" stroke-width="1.5"/><rect x="567.5" y="53.0" width="6" height="1.2" fill="#424242"/><rect x="567.5" y="55.3" width="6" height="1.2" fill="#424242"/><rect x="567.5" y="57.6" width="6" height="1.2" fill="#424242"/><rect x="567.5" y="59.9" width="6" height="1.2" fill="#424242"/><rect x="565" y="61.8" width="8.5" height="1.2" fill="#424242"/><rect x="581" y="49" width="1" height="17" fill="#8E99B0"/><rect x="595" y="51.5" width="7" height="1.3" fill="#424242"/><rect x="595" y="62" width="7" height="1.3" fill="#424242"/><rect x="589" y="56" width="4.5" height="2.2" fill="#1E2B41"/><rect x="598.5" y="56" width="4" height="2.2" fill="#1E2B41"/><path d="M598.5 57 H594.5 M597 54 L594 57 L597 60" fill="none" stroke="#00539C" stroke-width="2"/><rect x="609" y="51.5" width="7" height="1.3" fill="#424242"/><rect x="609" y="62" width="7" height="1.3" fill="#424242"/><rect x="617.5" y="56" width="4.5" height="2.2" fill="#1E2B41"/><path d="M609 57 H615 M612.5 54 L615.5 57 L612.5 60" fill="none" stroke="#00539C" stroke-width="2"/><rect x="629" y="49" width="1" height="17" fill="#8E99B0"/><path d="M637 54.5 H641.5 M639.8 52 L642.3 54.5 L639.8 57" fill="none" stroke="#00539C" stroke-width="2"/><text x="646.2" y="62.3" font-family="Liberation Sans" font-size="11.5" fill="#505050" text-anchor="middle">@</text><rect x="657.5" y="59.3" width="5" height="1" fill="#1E2B41"/><path d="M657.5 61.5 H662.5 L660 64 Z" fill="#1E2B41"/><path d="M36.5 431 H41 L43.5 433.5 V438.5 H36.5 Z" fill="#F0F0F0" stroke="#424242" stroke-width="1.2"/><rect x="38" y="434.5" width="3.5" height="0.9" fill="#424242"/><rect x="38" y="436.2" width="3.5" height="0.9" fill="#424242"/><rect x="42.5" y="426.5" width="6" height="9.5" fill="#424242"/><rect x="43.5" y="428" width="4" height="0.9" fill="#E9E9EC"/><rect x="43.5" y="429.8" width="4" height="0.9" fill="#E9E9EC"/><rect x="112.39999999999999" y="425.40000000000003" width="4" height="4" fill="none" stroke="#424242" stroke-width="1.2"/><rect x="120.39999999999999" y="425.40000000000003" width="4" height="4" fill="none" stroke="#424242" stroke-width="1.2"/><rect x="116.39999999999999" y="426.8" width="4" height="1.2" fill="#424242"/><rect x="112.39999999999999" y="433.40000000000003" width="4" height="4" fill="none" stroke="#424242" stroke-width="1.2"/><rect x="113.8" y="429.40000000000003" width="1.2" height="4" fill="#424242"/></svg>
<div class="a" style="left:321.5px;top:41.4px;width:41.6px;height:30.5px;border:4.5px solid #FE3333;border-bottom-width:5px;border-radius:6px 6px 6px 6px"></div>
</body></html>
